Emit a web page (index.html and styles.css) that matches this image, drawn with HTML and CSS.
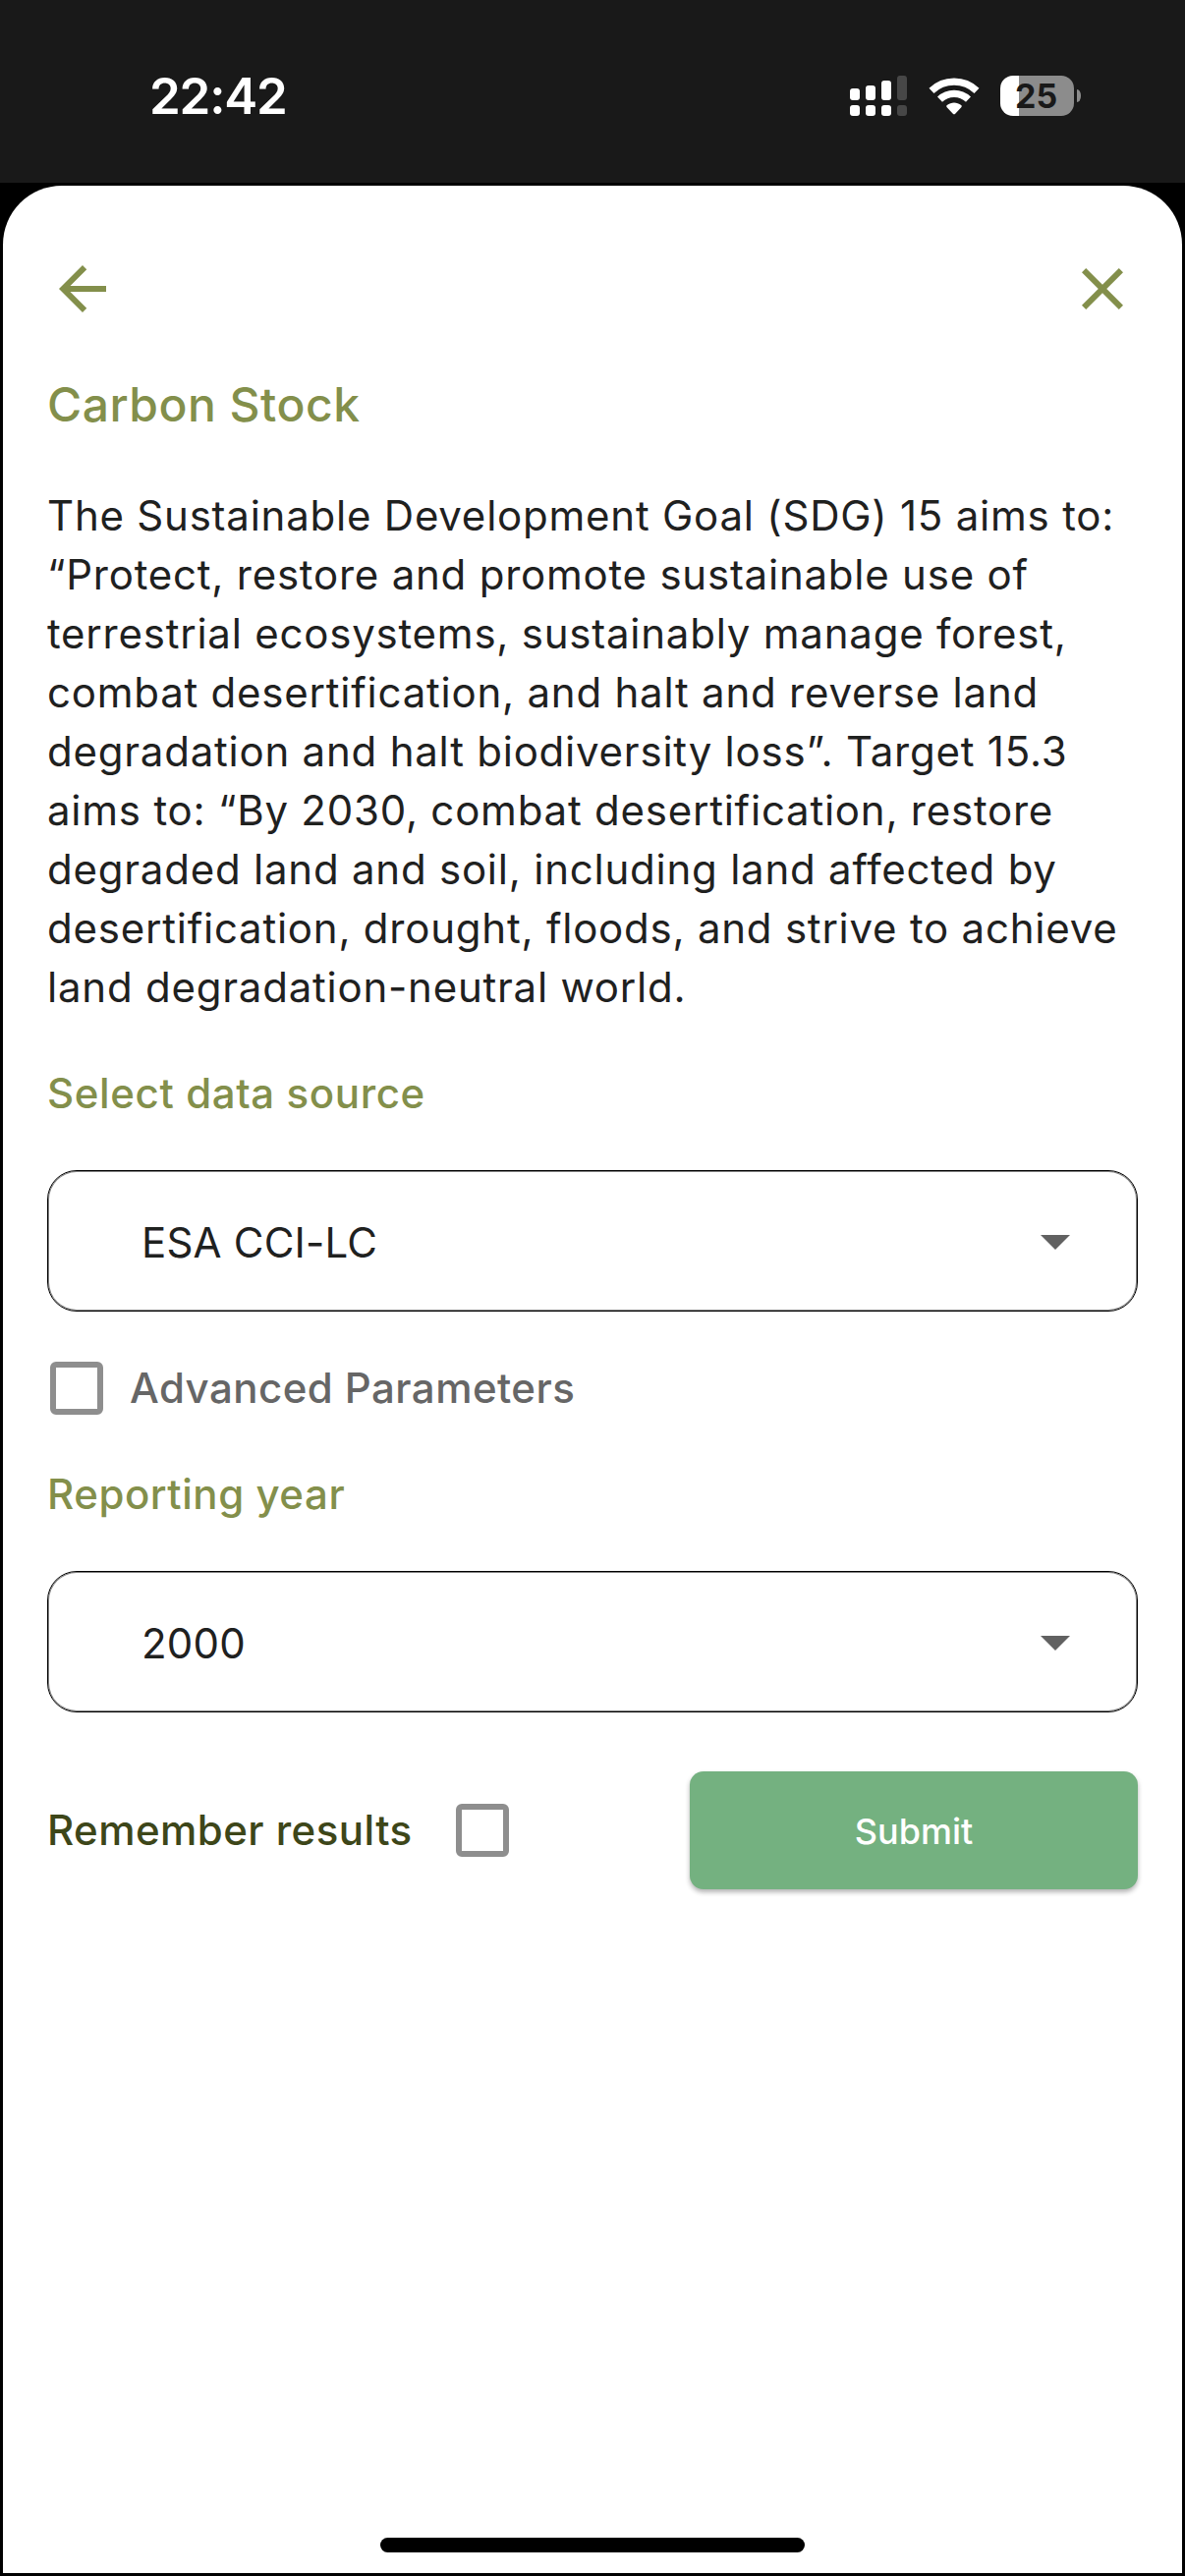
FILE: index.html
```html
<!DOCTYPE html>
<html lang="en">
<head>
<meta charset="utf-8">
<title>Carbon Stock</title>
<link rel="stylesheet" href="styles.css">
</head>
<body>
<div class="screen">
  <header class="status-bar">
    <time class="clock">22:42</time>
    <div class="status-icons">
      <svg class="signal" viewBox="0 0 58 41" aria-hidden="true">
        <g fill="#fff">
          <rect x="0" y="13" width="10" height="12" rx="3"/>
          <rect x="16" y="10" width="10" height="15" rx="3"/>
          <rect x="32" y="5" width="10" height="20" rx="3"/>
          <rect x="0" y="30" width="10" height="11" rx="3"/>
          <rect x="16" y="30" width="10" height="11" rx="3"/>
          <rect x="32" y="30" width="10" height="11" rx="3"/>
        </g>
        <g fill="#474747">
          <rect x="48" y="0" width="10" height="25" rx="3"/>
          <rect x="48" y="30" width="10" height="11" rx="3"/>
        </g>
      </svg>
      <svg class="wifi" viewBox="0 0 52 41" aria-hidden="true">
        <g fill="none" stroke="#fff">
          <path stroke-width="7.2" d="M3 15.3A33.3 33.3 0 0 1 49 15.3"/>
          <path stroke-width="7.2" d="M11.5 24.1A21 21 0 0 1 40.5 24.1"/>
        </g>
        <path fill="#fff" d="M26 39.3c-.5 0-.8-.2-1.200-.6L18.700 32.300c-.7-.8-.6-1.600.1-2.200 4.300-3.500 10.100-3.500 14.400 0 .7.6.8 1.400.1 2.200l-6.100 6.400c-.4.400-.7.600-1.200.6z"/>
      </svg>
      <div class="battery">
        <span class="battery-body">25</span>
        <span class="battery-tip"></span>
      </div>
    </div>
  </header>

  <main class="sheet">
    <nav class="toolbar">
      <svg class="icon" viewBox="0 0 24 24" aria-label="Back"><path d="M20 11H7.830l5.590-5.590L12 4l-8 8 8 8 1.410-1.410L7.830 13H20v-2z"/></svg>
      <svg class="icon" viewBox="0 0 24 24" aria-label="Close"><path d="M19 6.410L17.590 5 12 10.590 6.410 5 5 6.410 10.590 12 5 17.590 6.410 19 12 13.410 17.590 19 19 17.590 13.410 12z"/></svg>
    </nav>

    <h1 class="title">Carbon Stock</h1>
    <p class="description">The Sustainable Development Goal (SDG) 15 aims to:<br>“Protect, restore and promote sustainable use of<br>terrestrial ecosystems, sustainably manage forest,<br>combat desertification, and halt and reverse land<br>degradation and halt biodiversity loss”. Target 15.3<br>aims to: “By 2030, combat desertification, restore<br>degraded land and soil, including land affected by<br>desertification, drought, floods, and strive to achieve<br>land degradation-neutral world.</p>

    <h2 class="label label-source">Select data source</h2>
    <div class="select">
      <span class="select-value">ESA CCI-LC</span>
      <svg class="caret" viewBox="0 0 30 15" aria-hidden="true"><path d="M0 0h30L15 15z"/></svg>
    </div>

    <div class="option">
      <span class="checkbox"></span>
      <span class="option-text">Advanced Parameters</span>
    </div>

    <h2 class="label label-year">Reporting year</h2>
    <div class="select">
      <span class="select-value">2000</span>
      <svg class="caret" viewBox="0 0 30 15" aria-hidden="true"><path d="M0 0h30L15 15z"/></svg>
    </div>

    <div class="actions">
      <span class="remember">Remember results</span>
      <span class="checkbox"></span>
      <button class="submit" type="button">Submit</button>
    </div>

    <div class="home-indicator"></div>
  </main>
</div>
</body>
</html>
```
FILE: styles.css
```css
* {
  box-sizing: border-box;
}

body {
  margin: 0;
  background: #000;
  font-family: Inter, "Liberation Sans", sans-serif;
}

.screen {
  display: flex;
  flex-direction: column;
  width: 1206px;
  height: 2622px;
  overflow: hidden;
}

/* Status bar */
.status-bar {
  display: flex;
  justify-content: space-between;
  height: 186px;
  padding: 77px 106px 0 152px;
  background: #191919;
  color: #fff;
}

.clock {
  height: 41px;
  font-size: 51px;
  font-weight: 600;
  line-height: 41px;
  letter-spacing: -1.200px;
}

.status-icons {
  display: flex;
  height: 41px;
}

.signal {
  width: 58px;
  height: 41px;
}

.wifi {
  width: 52px;
  height: 41px;
  margin-left: 22px;
}

.battery {
  display: flex;
  align-items: center;
  gap: 3px;
  margin-left: 21px;
}

.battery-body {
  width: 75px;
  height: 41px;
  padding-left: 15px;
  border-radius: 13px;
  background: linear-gradient(to right, #fff 19px, #8c8c8c 19px);
  color: #191919;
  font-size: 34px;
  font-weight: 700;
  line-height: 42px;
}

.battery-tip {
  width: 4px;
  height: 13px;
  border-radius: 0 4px 4px 0 / 0 6px 6px 0;
  background: #8c8c8c;
}

/* Sheet */
.sheet {
  display: flex;
  flex-direction: column;
  height: 2430px;
  margin: 3px 3px 0;
  padding: 69px 45px 21px;
  border-radius: 60px 60px 0 0;
  background: #fff;
}

.toolbar {
  display: flex;
  justify-content: space-between;
}

.icon {
  width: 72px;
  height: 72px;
  fill: #838f4b;
}

.title {
  margin: 52px 0 0;
  color: #838f4b;
  font-size: 48px;
  font-weight: 500;
  line-height: 60px;
  letter-spacing: 0.500px;
}

.description {
  margin: 53px 0 0;
  color: #1f211f;
  font-size: 42px;
  font-weight: 400;
  line-height: 60px;
  letter-spacing: 0.770px;
  white-space: nowrap;
}

.label {
  margin: 48px 0;
  color: #838f4b;
  font-size: 42px;
  font-weight: 500;
  line-height: 60px;
  letter-spacing: 0.550px;
}

.label-source {
  letter-spacing: 0.620px;
}

.label-year {
  margin-top: 51px;
}

.select {
  display: flex;
  align-items: center;
  justify-content: space-between;
  height: 144px;
  padding: 0 68px 0 95px;
  border: 1px solid #000;
  border-radius: 30px;
  box-shadow: inset 0 0 0 1px #808080;
}

.select-value {
  padding-top: 3px;
  color: #1f211f;
  font-size: 42px;
  font-weight: 400;
  line-height: 60px;
  letter-spacing: 0.200px;
}

.caret {
  width: 30px;
  height: 15px;
  margin-top: 2px;
  fill: #616161;
}

.option {
  display: flex;
  align-items: center;
  gap: 27px;
  height: 54px;
  margin-top: 51px;
  padding-left: 3px;
}

.checkbox {
  flex: none;
  width: 54px;
  height: 54px;
  border: 6px solid #8e8e8e;
  border-radius: 6px;
}

.option-text {
  color: #666;
  font-size: 42px;
  font-weight: 500;
  line-height: 54px;
  letter-spacing: 0.450px;
}

.actions {
  display: flex;
  align-items: center;
  height: 120px;
  margin-top: 60px;
}

.remember {
  width: 416px;
  color: #3d4619;
  font-size: 42px;
  font-weight: 500;
  line-height: 60px;
  letter-spacing: 0.450px;
}

.submit {
  width: 456px;
  height: 120px;
  margin-left: auto;
  padding: 2px 0 0;
  border: 0;
  border-radius: 14px;
  background: #74b180;
  box-shadow: 0 3px 5px rgba(0, 0, 0, 0.300);
  color: #fff;
  font-family: inherit;
  font-size: 36px;
  font-weight: 500;
}

.home-indicator {
  width: 432px;
  height: 15px;
  margin: auto auto 0;
  border-radius: 8px;
  background: #000;
}
```
